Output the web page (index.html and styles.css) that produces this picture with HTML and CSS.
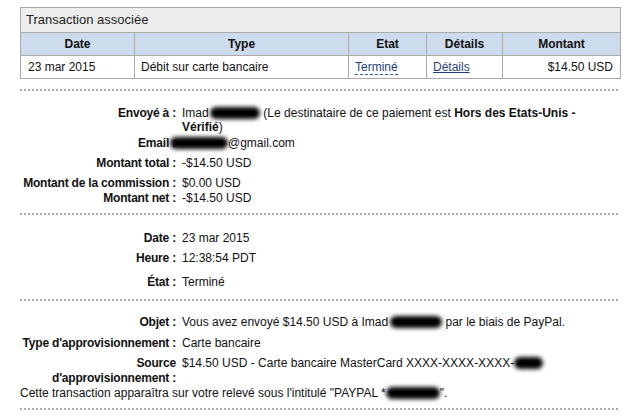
FILE: index.html
```html
<!DOCTYPE html>
<html>
<head>
  <link rel="stylesheet" href="styles.css">
  <meta charset="UTF-8">
  <title>Détails de la transaction</title>
</head>
<body>
  <div class="page">

    <table class="txn">
      <colgroup>
        <col class="c-date">
        <col class="c-type">
        <col class="c-etat">
        <col class="c-det">
        <col class="c-amt">
      </colgroup>
      <tr>
        <th class="txn-title" colspan="5">Transaction associée</th>
      </tr>
      <tr class="txn-head">
        <th>Date</th>
        <th>Type</th>
        <th>Etat</th>
        <th>Détails</th>
        <th>Montant</th>
      </tr>
      <tr class="txn-row">
        <td class="cell-date">23 mar 2015</td>
        <td>Débit sur carte bancaire</td>
        <td><a class="status" href="#">Terminé</a></td>
        <td><a class="link" href="#">Détails</a></td>
        <td class="amt">$14.50 USD</td>
      </tr>
    </table>

    <div class="sep"></div>

    <div class="info s1">
      <div class="row">
        <div class="lbl">Envoyé à :</div>
        <div class="val">Imad <span class="blur b-name"></span> (Le destinataire de ce paiement est <b>Hors des Etats-Unis - Vérifié</b>)</div>
      </div>
      <div class="row mt2">
        <div class="lbl">Email :</div>
        <div class="val"><span class="blur b-mail"></span>@gmail.com</div>
      </div>
      <div class="row mt6">
        <div class="lbl">Montant total :</div>
        <div class="val">-$14.50 USD</div>
      </div>
      <div class="row mt6">
        <div class="lbl">Montant de la commission :</div>
        <div class="val">$0.00 USD</div>
      </div>
      <div class="row mt1">
        <div class="lbl">Montant net :</div>
        <div class="val">-$14.50 USD</div>
      </div>
    </div>

    <div class="sep"></div>

    <div class="info s2">
      <div class="row">
        <div class="lbl">Date :</div>
        <div class="val">23 mar 2015</div>
      </div>
      <div class="row mt6">
        <div class="lbl">Heure :</div>
        <div class="val">12:38:54 PDT</div>
      </div>
      <div class="row mt10">
        <div class="lbl">État :</div>
        <div class="val">Terminé</div>
      </div>
    </div>

    <div class="sep"></div>

    <div class="info s3">
      <div class="row">
        <div class="lbl">Objet :</div>
        <div class="val">Vous avez envoyé $14.50 USD à Imad<span class="blur b-obj"></span> par le biais de PayPal.</div>
      </div>
      <div class="row mt7">
        <div class="lbl">Type d'approvisionnement :</div>
        <div class="val">Carte bancaire</div>
      </div>
      <div class="row mt6 tall">
        <div class="lbl">Source d'approvisionnement :</div>
        <div class="val">$14.50 USD - Carte bancaire MasterCard XXXX-XXXX-XXXX-<span class="blur b-card"></span></div>
      </div>
      <p class="note">Cette transaction apparaîtra sur votre relevé sous l'intitulé "PAYPAL *<span class="blur b-desc"></span>".</p>
    </div>

    <div class="sep"></div>

  </div>
</body>
</html>
```

FILE: styles.css
```css
body {
  margin: 0;
  background: #fff;
  color: #111;
  font-family: Arial, "Liberation Sans", sans-serif;
  font-size: 12px;
  line-height: 14px;
}

.page {
  width: 600px;
  padding: 7px 0 0 20px;
}

/* table */
.txn {
  width: 600px;
  border-collapse: collapse;
  table-layout: fixed;
}

.txn th, .txn td {
  border: 1px solid #aaa;
  padding: 0;
}

.txn-title {
  height: 24px;
  background: #eee;
  color: #222;
  font-size: 13px;
  font-weight: normal;
  text-align: left;
  padding-left: 5px !important;
}

.txn-head th {
  height: 22px;
  background: #cddcec;
  font-weight: bold;
  text-align: center;
}

.c-date { width: 114px; }
.c-type { width: 214px; }
.c-etat { width: 78px; }
.c-det { width: 76px; }
.c-amt { width: 118px; }

.txn-row td {
  height: 22px;
  padding-left: 6px;
}

.txn-row .cell-date {
  padding-left: 7px;
}

.txn-row .amt {
  text-align: right;
  padding: 0 7px 0 0;
}

.status {
  color: #1f3f7a;
  text-decoration: none;
  border-bottom: 1px dashed #2b5cb8;
}

.link {
  color: #1f3f7a;
  text-decoration: underline;
}

.sep {
  width: 600px;
  height: 2px;
  margin-top: 10px;
  background: repeating-linear-gradient(to right, #aaa 0 2px, transparent 2px 4px);
}

/* detail blocks */
.info {
  width: 580px;
  padding-bottom: 8px;
}

.s1 { padding-top: 15px; }
.s2 { padding-top: 16px; padding-bottom: 0; }
.s3 { padding-top: 14px; padding-bottom: 0; }

.s2 + .sep { margin-top: 10px; }
.s3 + .sep { margin-top: 8px; }
.s1 + .sep { margin-top: 0; }

.row {
  display: grid;
  grid-template-columns: 156px 1fr;
  column-gap: 6px;
}

.tall { line-height: 15px; }

.lbl {
  text-align: right;
  font-weight: bold;
  letter-spacing: -0.2px;
}

.val b {
  font-weight: bold;
}

.mt1 { margin-top: 1px; }
.mt2 { margin-top: 2px; }
.mt6 { margin-top: 6px; }
.mt7 { margin-top: 7px; }
.mt10 { margin-top: 10px; }

.note {
  margin: 0;
}

/* redacted bits */
.blur {
  display: inline-block;
  height: 12px;
  vertical-align: -2px;
  background: #000;
  border-radius: 6px;
  filter: blur(2px);
}

.b-name { width: 50px; margin-left: -2px; }
.b-mail { width: 58px; margin-left: -12px; }
.b-obj { width: 52px; margin-left: 2px; }
.b-card { width: 29px; }
.b-desc { width: 54px; }
```
